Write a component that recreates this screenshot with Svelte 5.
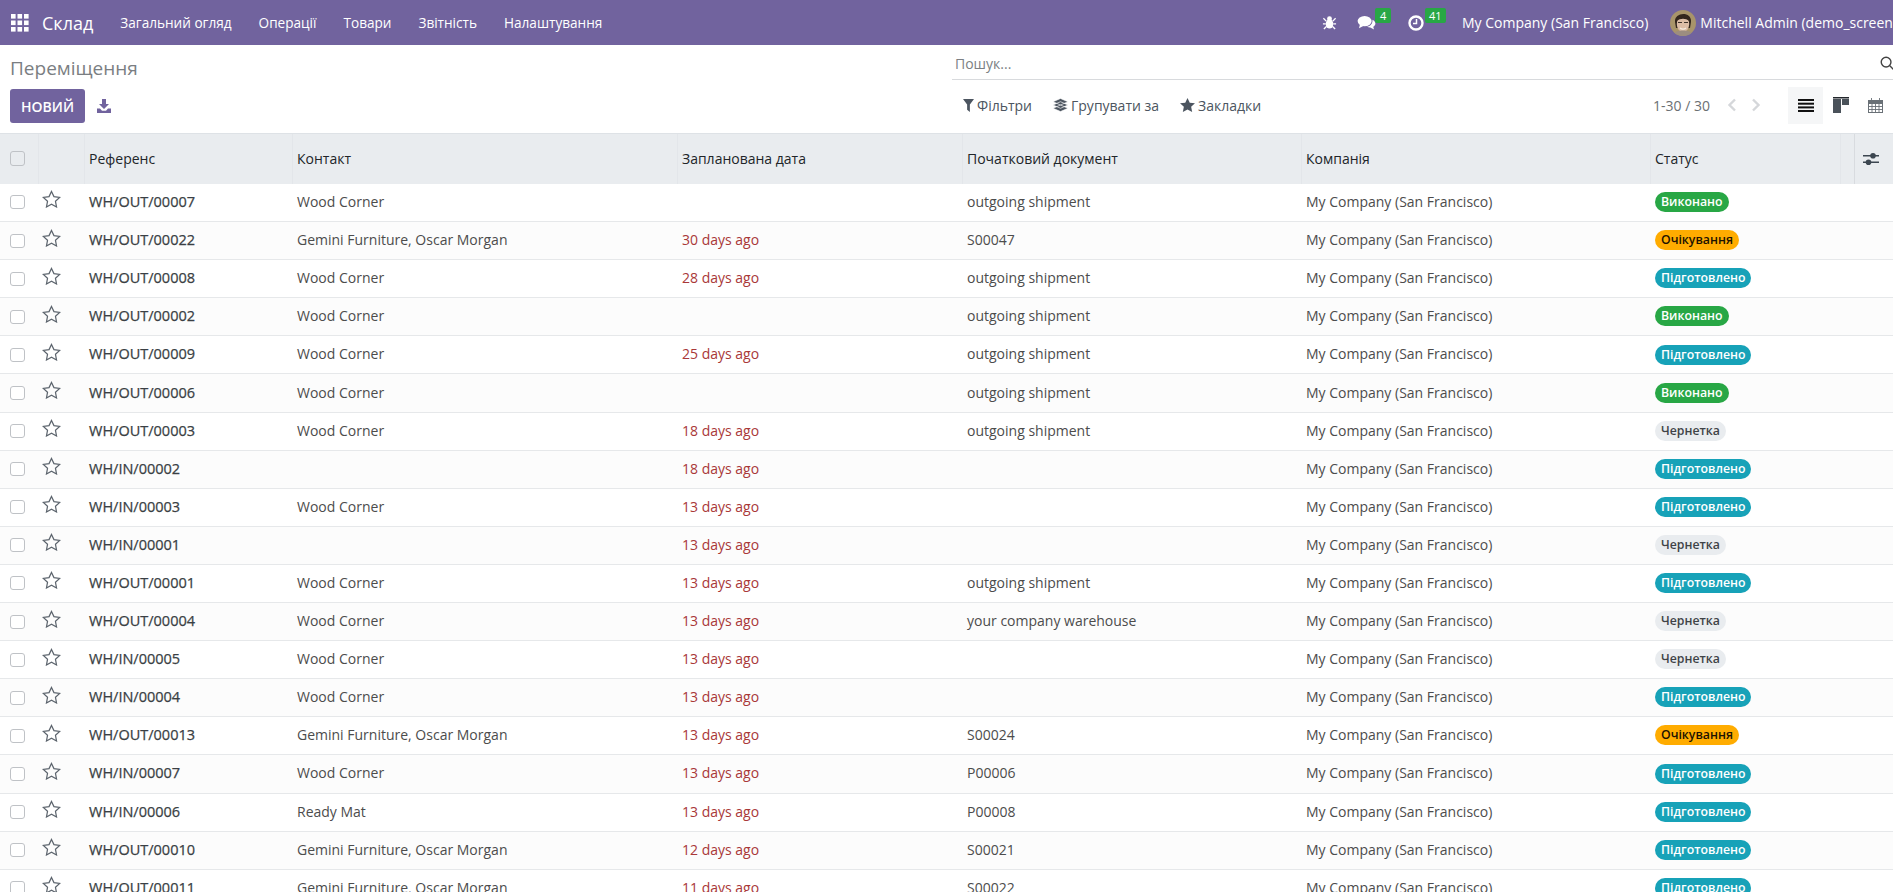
<script>
  const rows = [
    ['WH/OUT/00007','Wood Corner','','outgoing shipment','done'],
    ['WH/OUT/00022','Gemini Furniture, Oscar Morgan','30 days ago','S00047','wait'],
    ['WH/OUT/00008','Wood Corner','28 days ago','outgoing shipment','ready'],
    ['WH/OUT/00002','Wood Corner','','outgoing shipment','done'],
    ['WH/OUT/00009','Wood Corner','25 days ago','outgoing shipment','ready'],
    ['WH/OUT/00006','Wood Corner','','outgoing shipment','done'],
    ['WH/OUT/00003','Wood Corner','18 days ago','outgoing shipment','draft'],
    ['WH/IN/00002','','18 days ago','','ready'],
    ['WH/IN/00003','Wood Corner','13 days ago','','ready'],
    ['WH/IN/00001','','13 days ago','','draft'],
    ['WH/OUT/00001','Wood Corner','13 days ago','outgoing shipment','ready'],
    ['WH/OUT/00004','Wood Corner','13 days ago','your company warehouse','draft'],
    ['WH/IN/00005','Wood Corner','13 days ago','','draft'],
    ['WH/IN/00004','Wood Corner','13 days ago','','ready'],
    ['WH/OUT/00013','Gemini Furniture, Oscar Morgan','13 days ago','S00024','wait'],
    ['WH/IN/00007','Wood Corner','13 days ago','P00006','ready'],
    ['WH/IN/00006','Ready Mat','13 days ago','P00008','ready'],
    ['WH/OUT/00010','Gemini Furniture, Oscar Morgan','12 days ago','S00021','ready'],
    ['WH/OUT/00011','Gemini Furniture, Oscar Morgan','11 days ago','S00022','ready']
  ];
  const labels = { done: 'Виконано', wait: 'Очікування', ready: 'Підготовлено', draft: 'Чернетка' };
  const menu = ['Загальний огляд','Операції','Товари','Звітність','Налаштування'];
  const heads = ['Референс','Контакт','Запланована дата','Початковий документ','Компанія','Статус'];
</script>

<div class="page">
  <header class="nav">
    <svg class="apps" viewBox="0 0 18 18" width="18" height="18" fill="#fff">
      {#each [0,6.5,13] as y}{#each [0,6.5,13] as x}<rect x={x} y={y} width="4.6" height="4.6"/>{/each}{/each}
    </svg>
    <span class="brand">Склад</span>
    <nav class="menu">{#each menu as m}<span>{m}</span>{/each}</nav>
    <div class="tray">
      <svg class="bug" viewBox="0 0 16 16" width="15" height="15" fill="#fff"><ellipse cx="8" cy="9.5" rx="4" ry="5"/><circle cx="8" cy="4" r="2.6"/><path d="M1.5 3.5l3 3M14.5 3.5l-3 3M1 9.5h3M15 9.5h-3M2 15l3-3M14 15l-3-3" stroke="#fff" stroke-width="1.4"/></svg>
      <span class="ti msg">
        <svg viewBox="0 0 20 16" width="19" height="15" fill="#fff"><ellipse cx="8" cy="6.5" rx="7.5" ry="5.5"/><path d="M3 10l-1 4 5-2.5z"/><path d="M16.4 5c2 1 3.1 2.4 3.1 4 0 1.4-.9 2.7-2.3 3.5l.8 3-4-2.3c-1.3 0-2.5-.3-3.5-.9 3.5-.2 6.2-3 5.9-7.3z"/></svg>
        <b>4</b>
      </span>
      <span class="ti clk">
        <svg viewBox="0 0 16 16" width="16" height="16" fill="none" stroke="#fff"><circle cx="8" cy="8" r="6.5" stroke-width="2.4"/><path d="M8.5 4v4.5H5" stroke-width="1.5"/></svg>
        <b>41</b>
      </span>
      <span class="co">My Company (San Francisco)</span>
      <svg class="ava" viewBox="0 0 26 26" width="26" height="26">
        <defs><clipPath id="c"><circle cx="13" cy="13" r="13"/></clipPath></defs>
        <g clip-path="url(#c)"><rect width="26" height="26" fill="#a8946a"/><path d="M5 12C4 2 22 1 21 12l-1 6H6z" fill="#33261d"/><ellipse cx="13" cy="14" rx="6.2" ry="8" fill="#dcbda6"/><path d="M7 11c3-3 9-3 12 0l-1-5H8z" fill="#33261d"/><path d="M8 12.5h4M14 12.5h4" stroke="#40342c" stroke-width="1.2"/><path d="M10 18c2 1.5 4 1.5 6 0" stroke="#f5ece2" stroke-width="1.4" fill="none"/><path d="M3 26c1-5 6-5.5 10-5.5s9 .5 10 5.5z" fill="#9c8d80"/></g>
      </svg>
      <span class="user">Mitchell Admin (demo_screenshots)</span>
    </div>
  </header>

  <section class="cp">
    <div class="cp-l">
      <div class="title">Переміщення</div>
      <div class="acts">
        <button class="new">НОВИЙ</button>
        <svg class="dl" viewBox="0 0 14 14" width="14" height="14" fill="#71639e"><path d="M5 0h4v5h3L7 10 2 5h3z"/><path d="M0 9.5h3l2 2.2h4l2-2.2h3V14H0z"/></svg>
      </div>
    </div>
    <div class="cp-r">
      <div class="search">
        <span>Пошук...</span>
        <svg viewBox="0 0 16 16" width="15" height="15" fill="none" stroke="#444" stroke-width="1.5"><circle cx="6.5" cy="6.5" r="5.2"/><path d="M10.5 10.5L15 15"/></svg>
      </div>
      <div class="tools">
        <div class="filters">
          <span><svg viewBox="0 0 12 14" width="11" height="13" fill="#4c5560"><path d="M0 0h12L7.5 6v8l-3-2.500V6z"/></svg>Фільтри</span>
          <span><svg viewBox="0 0 16 14" width="15" height="14" fill="#4c5560" stroke="#fff" stroke-width=".7"><path d="M8 7l8 3.5L8 14l-8-3.5zM8 3.500l8 3.500-8 3.500L0 7zM8 0l8 3.500L8 7 0 3.500z"/></svg>Групувати за</span>
          <span><svg viewBox="0 0 16 15" width="15" height="14" fill="#4c5560"><path d="M8 0l2.400 5 5.600.7-4.100 3.800 1.100 5.500L8 12.300 3 15l1.100-5.500L0 5.700 5.600 5z"/></svg>Закладки</span>
        </div>
        <div class="pager">
          <span>1-30 / 30</span>
          <svg viewBox="0 0 10 14" width="10" height="14" fill="none" stroke="#d5d7da" stroke-width="2.4"><path d="M8 1.5L2.5 7 8 12.500"/></svg>
          <svg viewBox="0 0 10 14" width="10" height="14" fill="none" stroke="#d5d7da" stroke-width="2.4"><path d="M2 1.5L7.5 7 2 12.500"/></svg>
        </div>
        <div class="views">
          <span class="on"><svg viewBox="0 0 16 13" width="16" height="13" fill="#111"><rect width="16" height="2"/><rect y="3.7" width="16" height="2"/><rect y="7.4" width="16" height="2"/><rect y="11" width="16" height="2"/></svg></span>
          <span><svg viewBox="0 0 16 16" width="16" height="16" fill="#4a525a"><rect width="16" height="1.5" fill="#22272c"/><rect y="2" width="8" height="14"/><rect x="9" y="2" width="7" height="6"/></svg></span>
          <span><svg viewBox="0 0 15 15" width="15" height="15" fill="none" stroke="#6a7177"><rect x=".5" y="2.5" width="14" height="12"/><path d="M.5 8.5h14M.5 11.5h14M4 5.5v9M7.5 5.5v9M11 5.5v9M3.5 0v3.5M11.5 0v3.5" stroke-width=".9"/><path d="M0 2.5h15v3H0z" fill="#6a7177"/></svg></span>
        </div>
      </div>
    </div>
  </section>

  <table>
    <colgroup>
      <col class="c1"/><col class="c2"/><col class="c3"/><col class="c4"/><col class="c5"/><col class="c6"/><col class="c7"/><col class="c8"/><col class="c9"/><col class="c10"/>
    </colgroup>
    <thead>
      <tr>
        <th><span class="cb"></span></th>
        <th></th>
        {#each heads as h}<th>{h}</th>{/each}
        <th></th>
        <th class="opt"><svg viewBox="0 0 16 14" width="16" height="14" fill="#3c4650"><rect y="3" width="16" height="1.5"/><rect y="9.5" width="16" height="1.5"/><circle cx="10" cy="3.7" r="2.8"/><circle cx="5.5" cy="10.2" r="2.8"/></svg></th>
      </tr>
    </thead>
    <tbody>
      {#each rows as r, i}
        <tr class:odd={i % 2 === 1}>
          <td><span class="cb"></span></td>
          <td class="st"><svg viewBox="0 0 20 19" width="19" height="18" fill="none" stroke="#5c646d" stroke-width="1.3"><path d="M10 1.5l2.600 5.500 6 .8-4.400 4.100 1.100 6L10 15l-5.300 2.900 1.100-6L1.400 7.800l6-.8z"/></svg></td>
          <td class="ref">{r[0]}</td>
          <td>{r[1]}</td>
          <td class="late">{r[2]}</td>
          <td>{r[3]}</td>
          <td>My Company (San Francisco)</td>
          <td><span class="badge {r[4]}">{labels[r[4]]}</span></td>
          <td></td>
          <td></td>
        </tr>
      {/each}
    </tbody>
  </table>
</div>

<style>
  :global(body) { margin: 0; overflow: hidden; background: #fff; }
  .page { width: 1893px; height: 892px; overflow: hidden; font-family: "Open Sans", "Noto Sans", sans-serif; font-size: 14px; color: #4c4c4c; }
  .nav { height: 45px; background: #71639e; color: #fff; display: flex; align-items: center; padding-left: 11px; white-space: nowrap; }
  .apps { flex: none; }
  .brand { font-size: 18px; margin-left: 13px; }
  .menu { display: flex; gap: 27px; margin-left: 27px; font-size: 13.6px; }
  .tray { margin-left: auto; display: flex; align-items: center; width: 571px; flex: none; font-size: 14px; }
  .tray > * { flex: none; }
  .ti { position: relative; display: flex; }
  .msg { margin-left: 20px; }
  .clk { margin-left: 32px; }
  .ti b { position: absolute; left: 18px; top: -7px; background: #28a745; font-size: 11px; font-weight: 400; line-height: 15px; padding: 0 5px; border-radius: 2px; }
  .clk b { left: 17px; padding: 0 4px; }
  .co { margin-left: 38px; }
  .ava { margin-left: 22px; }
  .user { margin-left: 4px; }

  .cp { height: 88px; display: flex; }
  .cp-l { width: 952px; flex: none; padding-left: 10px; box-sizing: border-box; }
  .title { font-size: 19px; color: #7a7e82; margin-top: 11px; line-height: 24px; }
  .acts { display: flex; align-items: center; margin-top: 9px; }
  .new { background: #71639e; color: #fff; border: 0; border-radius: 3px; width: 75px; height: 34px; font: 600 14px "Open Sans", sans-serif; padding: 0; }
  .dl { margin-left: 12px; }
  .cp-r { flex: 1; min-width: 0; }
  .search { height: 32px; border-bottom: 1px solid #d8dadd; display: flex; align-items: center; justify-content: space-between; padding: 2px 0 0 3px; margin-bottom: -2px; color: #7c7f83; }
  .search svg { margin-right: -2px; flex: none; }
  .tools { display: flex; align-items: center; height: 54px; }
  .filters { display: flex; gap: 21px; padding-left: 11px; color: #4c5560; }
  .filters span { display: flex; align-items: center; gap: 3px; }
  .pager { margin-left: auto; display: flex; align-items: center; gap: 14px; color: #6b6f73; }
  .pager span { margin-right: 3px; }
  .views { display: flex; margin-left: 27px; }
  .views span { width: 35px; height: 37px; display: flex; align-items: center; justify-content: center; }
  .views .on { background: #f5f6f7; }

  table { border-collapse: collapse; table-layout: fixed; width: 1893px; }
  .c1 { width: 38px; } .c2 { width: 46px; } .c3 { width: 208px; } .c4 { width: 385px; } .c5 { width: 285px; }
  .c6 { width: 339px; } .c7 { width: 349px; } .c8 { width: 190px; } .c9 { width: 14px; } .c10 { width: 39px; }
  th { height: 50px; background: #e9ecef; border-top: 1px solid #dee2e6; box-sizing: border-box; font-weight: 400; text-align: left; color: #212529; padding: 0 5px; box-shadow: inset 1px 0 0 #e3e6ea; }
  th:first-child { box-shadow: none; padding-left: 10px; }
  .opt { box-shadow: inset 1px 0 0 #d8dbdf; padding-left: 9px; }
  .opt svg { display: block; }
  td { height: 38.1px; box-sizing: border-box; padding: 0 5px 2px; border-bottom: 1px solid #e6e8ea; white-space: nowrap; }
  td:first-child { padding: 0 0 0 10px; }
  .odd td { background: #fcfcfc; }
  .cb { display: block; width: 13px; height: 12px; border: 1px solid #bfc2c6; border-radius: 3px; background: #fff; }
  th .cb { background: transparent; height: 13px; }
  .st { padding: 0 0 6px 4px; }
  .st svg { display: block; }
  .ref { color: #3a3f44; font-size: 14.5px; -webkit-text-stroke: 0.25px #3a3f44; }
  .late { color: #a93838; }
  .badge { display: inline-block; line-height: 20px; border-radius: 10px; padding: 0 6px; font-size: 12.3px; font-weight: 600; vertical-align: middle; }
  .done { background: #28a745; color: #fff; }
  .wait { background: #ffac00; color: #1d1200; }
  .ready { background: #17a2b8; color: #fff; }
  .draft { background: #e9ecef; color: #3f4347; }
</style>
